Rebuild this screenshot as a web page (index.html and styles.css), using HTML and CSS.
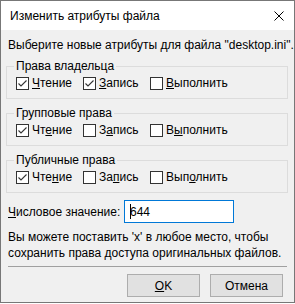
FILE: index.html
```html
<!DOCTYPE html>
<html lang="ru">
<head>
    <meta charset="UTF-8">
    <title>Изменить атрибуты файла</title>
    <link rel="stylesheet" href="styles.css">
</head>
<body>
<div class="dialog">

    <div class="titlebar">
        <span class="title">Изменить атрибуты файла</span>
        <svg class="close" width="10" height="10" viewBox="0 0 10 10">
            <path d="M0.5 0.5L9.5 9.5M9.5 0.5L0.5 9.5" stroke="#000" stroke-width="1" fill="none"/>
        </svg>
    </div>

    <div class="content">
        <p class="intro">Выберите новые атрибуты для файла "desktop.ini".</p>

        <fieldset class="group">
            <legend>Права владельца</legend>
            <div class="checks">
                <label class="check"><span class="box"><svg width="11" height="11" viewBox="0 0 11 11"><path d="M1.5 5.5L4 8L9.5 2.5" stroke="#333" stroke-width="1.1" fill="none"/></svg></span><span><u>Ч</u>тение</span></label>
                <label class="check"><span class="box"><svg width="11" height="11" viewBox="0 0 11 11"><path d="M1.5 5.5L4 8L9.5 2.5" stroke="#333" stroke-width="1.1" fill="none"/></svg></span><span><u>З</u>апись</span></label>
                <label class="check"><span class="box"></span><span><u>В</u>ыполнить</span></label>
            </div>
        </fieldset>

        <fieldset class="group">
            <legend>Групповые права</legend>
            <div class="checks">
                <label class="check"><span class="box"><svg width="11" height="11" viewBox="0 0 11 11"><path d="M1.5 5.5L4 8L9.5 2.5" stroke="#333" stroke-width="1.1" fill="none"/></svg></span><span>Чт<u>е</u>ние</span></label>
                <label class="check"><span class="box"></span><span>З<u>а</u>пись</span></label>
                <label class="check"><span class="box"></span><span>В<u>ы</u>полнить</span></label>
            </div>
        </fieldset>

        <fieldset class="group">
            <legend>Публичные права</legend>
            <div class="checks">
                <label class="check"><span class="box"><svg width="11" height="11" viewBox="0 0 11 11"><path d="M1.5 5.5L4 8L9.5 2.5" stroke="#333" stroke-width="1.1" fill="none"/></svg></span><span>Чте<u>н</u>ие</span></label>
                <label class="check"><span class="box"></span><span>За<u>п</u>ись</span></label>
                <label class="check"><span class="box"></span><span>Вып<u>о</u>лнить</span></label>
            </div>
        </fieldset>

        <div class="numeric">
            <label class="numeric_label"><u>Ч</u>исловое значение:</label>
            <div class="field"><span class="caret"></span>644</div>
        </div>

        <p class="hint">Вы можете поставить 'x' в любое место, чтобы<br>сохранить права доступа оригинальных файлов.</p>

        <div class="sep"></div>

        <div class="buttons">
            <button class="btn"><u>O</u>K</button>
            <button class="btn">Отмена</button>
        </div>
    </div>

</div>
</body>
</html>
```

FILE: styles.css
```css
body, div, p, fieldset, legend {
    margin: 0;
    padding: 0;
}
body {
    background: #ffffff;
    font-family: "Liberation Sans", Arial, sans-serif;
    font-size: 12px;
    line-height: 16px;
    color: #000;
}
.dialog {
    width: 295px;
    height: 303px;
    box-sizing: border-box;
    border: 1px solid #777777;
    background: #f0f0f0;
    white-space: nowrap;
}
.titlebar {
    height: 29px;
    background: #ffffff;
    display: flex;
    align-items: center;
    justify-content: space-between;
    padding: 0 10px 0 9px;
}
.close {
    display: block;
}
.content {
    padding: 7px 6px 0 5px;
}
.intro {
    padding-left: 2px;
}
.group {
    margin-top: 5px;
    padding: 0 7px 7px;
    border: 1px solid #dcdcdc;
    min-width: 0;
}
.group + .group {
    margin-top: 6px;
}
.group legend {
    padding: 0 2px;
    line-height: 16px;
}
.checks {
    margin: 1px 0 0 2px;
    display: grid;
    grid-template-columns: 67px 67px auto;
}
.check {
    display: flex;
    align-items: center;
    height: 16px;
}
.box {
    width: 13px;
    height: 13px;
    box-sizing: border-box;
    border: 1px solid #333333;
    background: #ffffff;
    margin-right: 3px;
    display: flex;
    align-items: center;
    justify-content: center;
}
.box svg {
    display: block;
}
.numeric {
    margin-top: 7px;
    padding-left: 2px;
    display: flex;
    align-items: center;
}
.numeric_label {
    width: 116px;
    flex: none;
}
.field {
    width: 110px;
    height: 23px;
    box-sizing: border-box;
    border: 1px solid #0078d7;
    background: #ffffff;
    padding-left: 5px;
    display: flex;
    align-items: center;
}
.caret {
    width: 1px;
    height: 15px;
    background: #000;
    margin-right: -1px;
}
.hint {
    margin-top: 6px;
    padding-left: 2px;
}
.sep {
    margin: 5px 1px 0 2px;
    height: 1px;
    background: #a0a0a0;
}
.buttons {
    margin-top: 7px;
    padding-right: 5px;
    display: flex;
    justify-content: flex-end;
    gap: 10px;
}
.btn {
    width: 73px;
    height: 23px;
    border: 1px solid #adadad;
    background: #e1e1e1;
    font: inherit;
    color: #000;
    padding: 0;
}
```
